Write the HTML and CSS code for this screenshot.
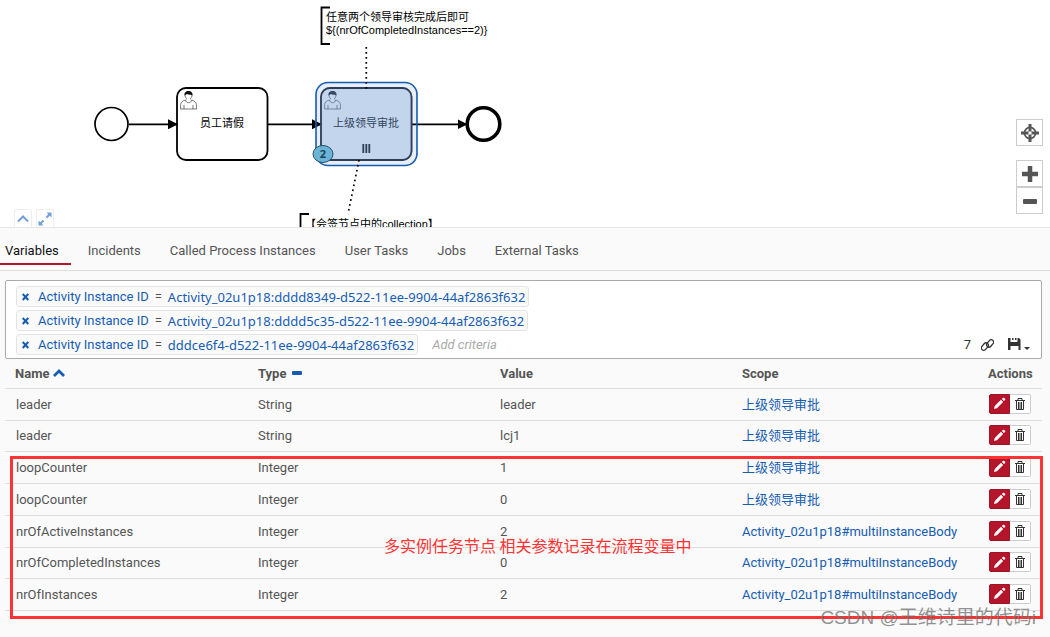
FILE: index.html
```
<!DOCTYPE html>
<html lang="zh-CN">
<head>
<meta charset="utf-8">
<title>Process Instance</title>
<link rel="stylesheet" href="styles.css">
</head>
<body>
<svg class="defs" aria-hidden="true">
  <symbol id="user" viewBox="0 0 17 19">
    <path d="M5.5 9.5C2.5 10.4 1 11.5 .6 14v4.5h15.8V14c-.4-2.500-1.900-3.600-4.900-4.500" fill="#fff" stroke="currentColor" stroke-width=".6"/>
    <path d="M5.500 9.500c0 3.600 6 3.600 6 0M4 18.500V14.500M13 18.500V14.500" fill="none" stroke="currentColor" stroke-width=".6"/>
    <path d="M6.500 8.800V8C4.500 6.500 4.200 1 8.500 1s4 5.500 2 7v.8" fill="#fff" stroke="currentColor" stroke-width=".6"/>
    <path d="M4.600 5C4 2 6 .5 8.500 .5S13 2 12.400 5C11 3.600 9.500 4.800 8.500 4S6 3.800 4.600 5z" fill="#111"/>
  </symbol>
  <symbol id="pencil" viewBox="0 0 14 14">
    <path d="M1 13l.9-3.200L8.600 3l2.300 2.300L4.200 12.100zM9.500 2.100l1.200-1.100c.5-.4 1-.4 1.400 0l.9.900c.4.500.4.900 0 1.400l-1.200 1.100z" fill="currentColor"/>
  </symbol>
  <symbol id="trash" viewBox="0 0 12 14">
    <path d="M1 3.500h10M4 3V1.500h4V3M2.500 4v8.500h7V4M4.500 5v7M6 5v7M7.500 5v7" fill="none" stroke="currentColor"/>
  </symbol>
</svg>

<main class="page">
  <section class="diagram">
    <svg class="canvas" width="560" height="227">
      <defs>
        <marker id="arrow" viewBox="0 0 10 10" refX="10" refY="5" markerWidth="10" markerHeight="10" markerUnits="userSpaceOnUse" orient="auto"><path d="M0 0l10 5-10 5z"/></marker>
      </defs>
      <g fill="#fff" stroke="#000">
        <circle cx="111.500" cy="124" r="16.500" stroke-width="1.700"/>
        <rect x="177" y="88" width="90.500" height="72" rx="9" stroke-width="1.800"/>
        <rect x="321" y="88" width="90.500" height="72" rx="9" stroke-width="1.800"/>
        <circle cx="483.500" cy="124" r="16.300" stroke-width="3.600"/>
      </g>
      <g stroke="#000" stroke-width="1.700">
        <path d="M129 124.300H178" marker-end="url(#arrow)"/>
        <path d="M268 124.300H322" marker-end="url(#arrow)"/>
        <path d="M412 124.300H467.500" marker-end="url(#arrow)"/>
      </g>
      <svg class="person" x="180" y="90" width="17" height="20"><use href="#user"/></svg>
      <svg class="person" x="324" y="90" width="17" height="20"><use href="#user"/></svg>
      <text class="label" x="222" y="127" text-anchor="middle">员工请假</text>
      <text class="label" x="366" y="127" text-anchor="middle">上级领导审批</text>
      <path d="M363.300 144v9M366.300 144v9M369.300 144v9" stroke="#000" stroke-width="1.800"/>
      <rect x="316" y="82.500" width="101" height="83" rx="12" fill="#155cb5" fill-opacity=".1" stroke="#155cb5" stroke-width="1.600"/>
      <rect x="320" y="87" width="92.500" height="74" rx="10" fill="#7ea5d8" fill-opacity=".35"/>
      <path d="M366.300 47v42M359 160l-11 54" fill="none" stroke="#000" stroke-width="1.700" stroke-dasharray="1.700 3.300"/>
      <path d="M330 7.500h-8.500v36.500h8.500M309 214h-8.500v20" fill="none" stroke="#000" stroke-width="1.800"/>
      <text class="label" x="326" y="21">任意两个领导审核完成后即可</text>
      <text class="label" x="326" y="34">${(nrOfCompletedInstances==2)}</text>
      <text class="label" x="305" y="228">【会签节点中的collection】</text>
      <ellipse cx="323" cy="154" rx="10" ry="8.500" fill="#6bb4d8" stroke="#2b5268"/>
      <text class="count" x="323" y="158" text-anchor="middle">2</text>
    </svg>
    <div class="resize">
      <button aria-label="Collapse"><svg width="14" height="14" viewBox="0 0 14 14"><path d="M2 9.500l5-5 5 5" fill="none" stroke="currentColor" stroke-width="2"/></svg></button>
      <button aria-label="Maximize"><svg width="14" height="14" viewBox="0 0 14 14"><path d="M8.500 5.500L12 2M5.500 8.500L2 12" stroke="currentColor" stroke-width="2"/><path d="M8.500 .5h5v5zM.5 8.500v5h5z" fill="currentColor"/></svg></button>
    </div>
    <div class="zoom">
      <button class="reset" aria-label="Reset"><svg width="20" height="20" viewBox="0 0 20 20"><circle cx="10" cy="10" r="5.600" fill="none" stroke="currentColor" stroke-width="1.700"/><path d="M10 1v7.500M10 11.500v7.500M1 10h7.500M11.500 10h7.500" stroke="currentColor" stroke-width="3"/></svg></button>
      <button aria-label="Zoom in"><svg width="18" height="18" viewBox="0 0 18 18"><path d="M9 1v16M1 9h16" stroke="currentColor" stroke-width="4.500"/></svg></button>
      <button aria-label="Zoom out"><svg width="18" height="18" viewBox="0 0 18 18"><rect x="2" y="7" width="14" height="5" rx="1" fill="currentColor"/></svg></button>
    </div>
  </section>

  <nav class="tabs">
    <a class="tab active" href="#variables">Variables</a>
    <a class="tab" href="#incidents">Incidents</a>
    <a class="tab" href="#called">Called Process Instances</a>
    <a class="tab" href="#user-tasks">User Tasks</a>
    <a class="tab" href="#jobs">Jobs</a>
    <a class="tab" href="#external">External Tasks</a>
  </nav>

  <section class="content">
    <div class="search">
      <div class="criterion"><button class="remove" aria-label="Remove"><svg width="7" height="8" viewBox="0 0 7 8"><path d="M.7 1l5.600 6M6.300 1L.7 7" stroke="currentColor" stroke-width="2"/></svg></button><a href="#n">Activity Instance ID</a><span>=</span><a class="value" href="#v">Activity_02u1p18:dddd8349-d522-11ee-9904-44af2863f632</a></div>
      <div class="criterion"><button class="remove" aria-label="Remove"><svg width="7" height="8" viewBox="0 0 7 8"><path d="M.7 1l5.600 6M6.300 1L.7 7" stroke="currentColor" stroke-width="2"/></svg></button><a href="#n">Activity Instance ID</a><span>=</span><a class="value" href="#v">Activity_02u1p18:dddd5c35-d522-11ee-9904-44af2863f632</a></div>
      <div class="last-line">
        <div class="criterion"><button class="remove" aria-label="Remove"><svg width="7" height="8" viewBox="0 0 7 8"><path d="M.7 1l5.600 6M6.300 1L.7 7" stroke="currentColor" stroke-width="2"/></svg></button><a href="#n">Activity Instance ID</a><span>=</span><a class="value" href="#v">dddce6f4-d522-11ee-9904-44af2863f632</a></div>
        <input class="add" type="text" placeholder="Add criteria" aria-label="Add criteria">
        <div class="tools">
          <span>7</span>
          <button aria-label="Copy link"><svg width="13" height="14" viewBox="0 0 13 14"><g transform="rotate(-50 6.500 7)" fill="none" stroke="currentColor" stroke-width="1.300"><rect x="-.5" y="3.600" width="8.200" height="4.800" rx="2.400"/><rect x="5.300" y="5.600" width="8.200" height="4.800" rx="2.400"/></g></svg></button>
          <button class="save" aria-label="Save"><svg width="22" height="14" viewBox="0 0 22 14"><path d="M0 0h2.500v4.500h7V0H11l1.500 1.500V12h-2V7.500h-8V12H0zM4 0h1.500v2H4zM7 0h1.500v2H7z" fill="currentColor"/><path d="M0 4h12v4H0z" fill="currentColor"/><path d="M16 9h6l-3 3z" fill="currentColor"/></svg></button>
        </div>
      </div>
    </div>

    <table class="vars">
      <thead>
        <tr>
          <th class="w-name">Name <svg width="12" height="9" viewBox="0 0 12 9"><path d="M1 6l5-5 5 5" transform="translate(0 1)" fill="none" stroke="#155cb5" stroke-width="2.800"/></svg></th>
          <th class="w-col">Type <svg class="minus" width="10" height="9" viewBox="0 0 10 9"><rect y="2" width="10" height="4" rx="1" fill="#155cb5"/></svg></th>
          <th class="w-col">Value</th>
          <th>Scope</th>
          <th class="w-actions">Actions</th>
        </tr>
      </thead>
      <tbody>
        <tr><td>leader</td><td>String</td><td>leader</td><td><a href="#s">上级领导审批</a></td><td><div class="actions"><button class="edit" aria-label="Edit"><svg width="13" height="13"><use href="#pencil"/></svg></button><button class="delete" aria-label="Delete"><svg width="12" height="14"><use href="#trash"/></svg></button></div></td></tr>
        <tr><td>leader</td><td>String</td><td>lcj1</td><td><a href="#s">上级领导审批</a></td><td><div class="actions"><button class="edit" aria-label="Edit"><svg width="13" height="13"><use href="#pencil"/></svg></button><button class="delete" aria-label="Delete"><svg width="12" height="14"><use href="#trash"/></svg></button></div></td></tr>
        <tr><td>loopCounter</td><td>Integer</td><td>1</td><td><a href="#s">上级领导审批</a></td><td><div class="actions"><button class="edit" aria-label="Edit"><svg width="13" height="13"><use href="#pencil"/></svg></button><button class="delete" aria-label="Delete"><svg width="12" height="14"><use href="#trash"/></svg></button></div></td></tr>
        <tr><td>loopCounter</td><td>Integer</td><td>0</td><td><a href="#s">上级领导审批</a></td><td><div class="actions"><button class="edit" aria-label="Edit"><svg width="13" height="13"><use href="#pencil"/></svg></button><button class="delete" aria-label="Delete"><svg width="12" height="14"><use href="#trash"/></svg></button></div></td></tr>
        <tr><td>nrOfActiveInstances</td><td>Integer</td><td>2</td><td><a href="#s">Activity_02u1p18#multiInstanceBody</a></td><td><div class="actions"><button class="edit" aria-label="Edit"><svg width="13" height="13"><use href="#pencil"/></svg></button><button class="delete" aria-label="Delete"><svg width="12" height="14"><use href="#trash"/></svg></button></div></td></tr>
        <tr><td>nrOfCompletedInstances</td><td>Integer</td><td>0</td><td><a href="#s">Activity_02u1p18#multiInstanceBody</a></td><td><div class="actions"><button class="edit" aria-label="Edit"><svg width="13" height="13"><use href="#pencil"/></svg></button><button class="delete" aria-label="Delete"><svg width="12" height="14"><use href="#trash"/></svg></button></div></td></tr>
        <tr><td>nrOfInstances</td><td>Integer</td><td>2</td><td><a href="#s">Activity_02u1p18#multiInstanceBody</a></td><td><div class="actions"><button class="edit" aria-label="Edit"><svg width="13" height="13"><use href="#pencil"/></svg></button><button class="delete" aria-label="Delete"><svg width="12" height="14"><use href="#trash"/></svg></button></div></td></tr>
      </tbody>
    </table>
  </section>

  <div class="highlight"></div>
  <p class="note">多实例任务节点 相关参数记录在流程变量中</p>
  <p class="watermark">CSDN @王维诗里的代码i</p>
</main>
</body>
</html>
```

FILE: styles.css
```
* { box-sizing: border-box; }

body {
  margin: 0;
  background: #fafafa;
  color: #555;
  font: 13px/18px Roboto, "Noto Sans CJK SC", sans-serif;
}

a { color: #155cb5; text-decoration: none; }

button {
  display: flex;
  align-items: center;
  justify-content: center;
  padding: 0;
  border: 0;
  background: none;
  color: inherit;
  font: inherit;
}

.defs { position: absolute; width: 0; height: 0; }

.page {
  position: relative;
  min-height: 100vh;
  overflow: hidden;
}

/* Diagram */
.diagram {
  position: relative;
  height: 228px;
  overflow: hidden;
  background: #fff;
  border-bottom: 1px solid #e6e6e6;
}

.canvas { display: block; }

.label { font: 11px "Liberation Sans", "Noto Sans CJK SC", sans-serif; fill: #000; }

.count { font: bold 11px "Open Sans", sans-serif; fill: #1f4357; }

.person { color: #222; }

.resize {
  position: absolute;
  left: 14px;
  bottom: 0;
  display: flex;
  gap: 4px;
}

.resize button {
  width: 18px;
  height: 18px;
  border: 1px solid #eee;
  border-bottom: 0;
  border-radius: 3px 3px 0 0;
  color: #73a0d8;
}

.zoom {
  position: absolute;
  right: 7px;
  top: 119px;
}

.zoom button {
  width: 27px;
  height: 27px;
  border: 1px solid #ccc;
  background: #fff;
}

.zoom .reset { margin-bottom: 14px; }

/* Tabs */
.tabs {
  display: flex;
  height: 43px;
  border-bottom: 1px solid #ddd;
}

.tab {
  height: 37px;
  margin-left: 5px;
  padding: 14px 12px 0;
  color: #555;
}

.tab.active {
  margin-left: 0;
  padding-left: 5px;
  color: #111;
  border-bottom: 2px solid #b5152b;
}

/* Search */
.content { padding: 9px 8px 0 5px; }

.search {
  display: flex;
  flex-direction: column;
  align-items: flex-start;
  gap: 3px;
  padding: 5px 10px 3px;
  border: 1px solid #aaa;
  border-radius: 2px;
  background: #fff;
}

.criterion {
  display: flex;
  align-items: center;
  height: 21px;
  padding: 0 3px 0 5px;
  border: 1px solid #e4e4e4;
  border-radius: 3px;
  background: #fafafa;
}

.criterion span { padding: 0 6px; }

.value { font-family: "Noto Sans", sans-serif; }

.remove { margin-right: 9px; color: #155cb5; }

.last-line {
  display: flex;
  align-items: center;
  align-self: stretch;
}

.add {
  flex: 1;
  min-width: 0;
  margin-left: 14px;
  padding: 0;
  border: 0;
  background: none;
  font: italic 13px/18px Roboto, sans-serif;
}

.add::placeholder { color: #aaa; }

.tools {
  display: flex;
  align-items: center;
  gap: 10px;
  color: #333;
}

.save { margin: 0 1px 0 4px; }

/* Variables table */
.vars {
  width: 100%;
  border-collapse: collapse;
  table-layout: fixed;
}

.vars tr { height: 32px; }

.vars thead tr { height: 29px; }

.vars tbody tr:nth-child(4n+2) { height: 31px; }

.vars th,
.vars td {
  padding: 1px 10px 0;
  border-bottom: 1px solid #ddd;
  text-align: left;
}

.vars td a { white-space: nowrap; }

.vars .w-name { width: 243px; }

.w-name, .vars td:first-child { padding-left: 11px; }

.w-col { width: 242px; }

.minus { margin-left: 2px; }

.w-actions { width: 64px; }

.actions { display: flex; margin-left: 1px; padding-bottom: 2px; }

.actions button { height: 20px; border: 1px solid #ccc; }

.actions .edit {
  width: 21px;
  border-color: #a01226;
  border-radius: 2px 0 0 2px;
  background: #b5152b;
  color: #fff;
}

.actions .delete {
  width: 21px;
  border-left: 0;
  border-radius: 0 2px 2px 0;
  background: #fff;
  color: #333;
}

/* Annotations lying over the page */
.highlight {
  position: absolute;
  left: 10px;
  right: 7px;
  top: 456px;
  height: 163px;
  border: 3px solid #ff3333;
}

.note,
.watermark {
  position: absolute;
  margin: 0;
  white-space: nowrap;
}

.note {
  left: 384px;
  top: 533px;
  color: #ff3333;
  font: 16px/24px "Noto Sans CJK SC", sans-serif;
}

.watermark {
  right: 14px;
  top: 605px;
  color: rgba(110, 110, 110, .75);
  font: 19px/26px "Liberation Sans", "Noto Sans CJK SC", sans-serif;
}
```
